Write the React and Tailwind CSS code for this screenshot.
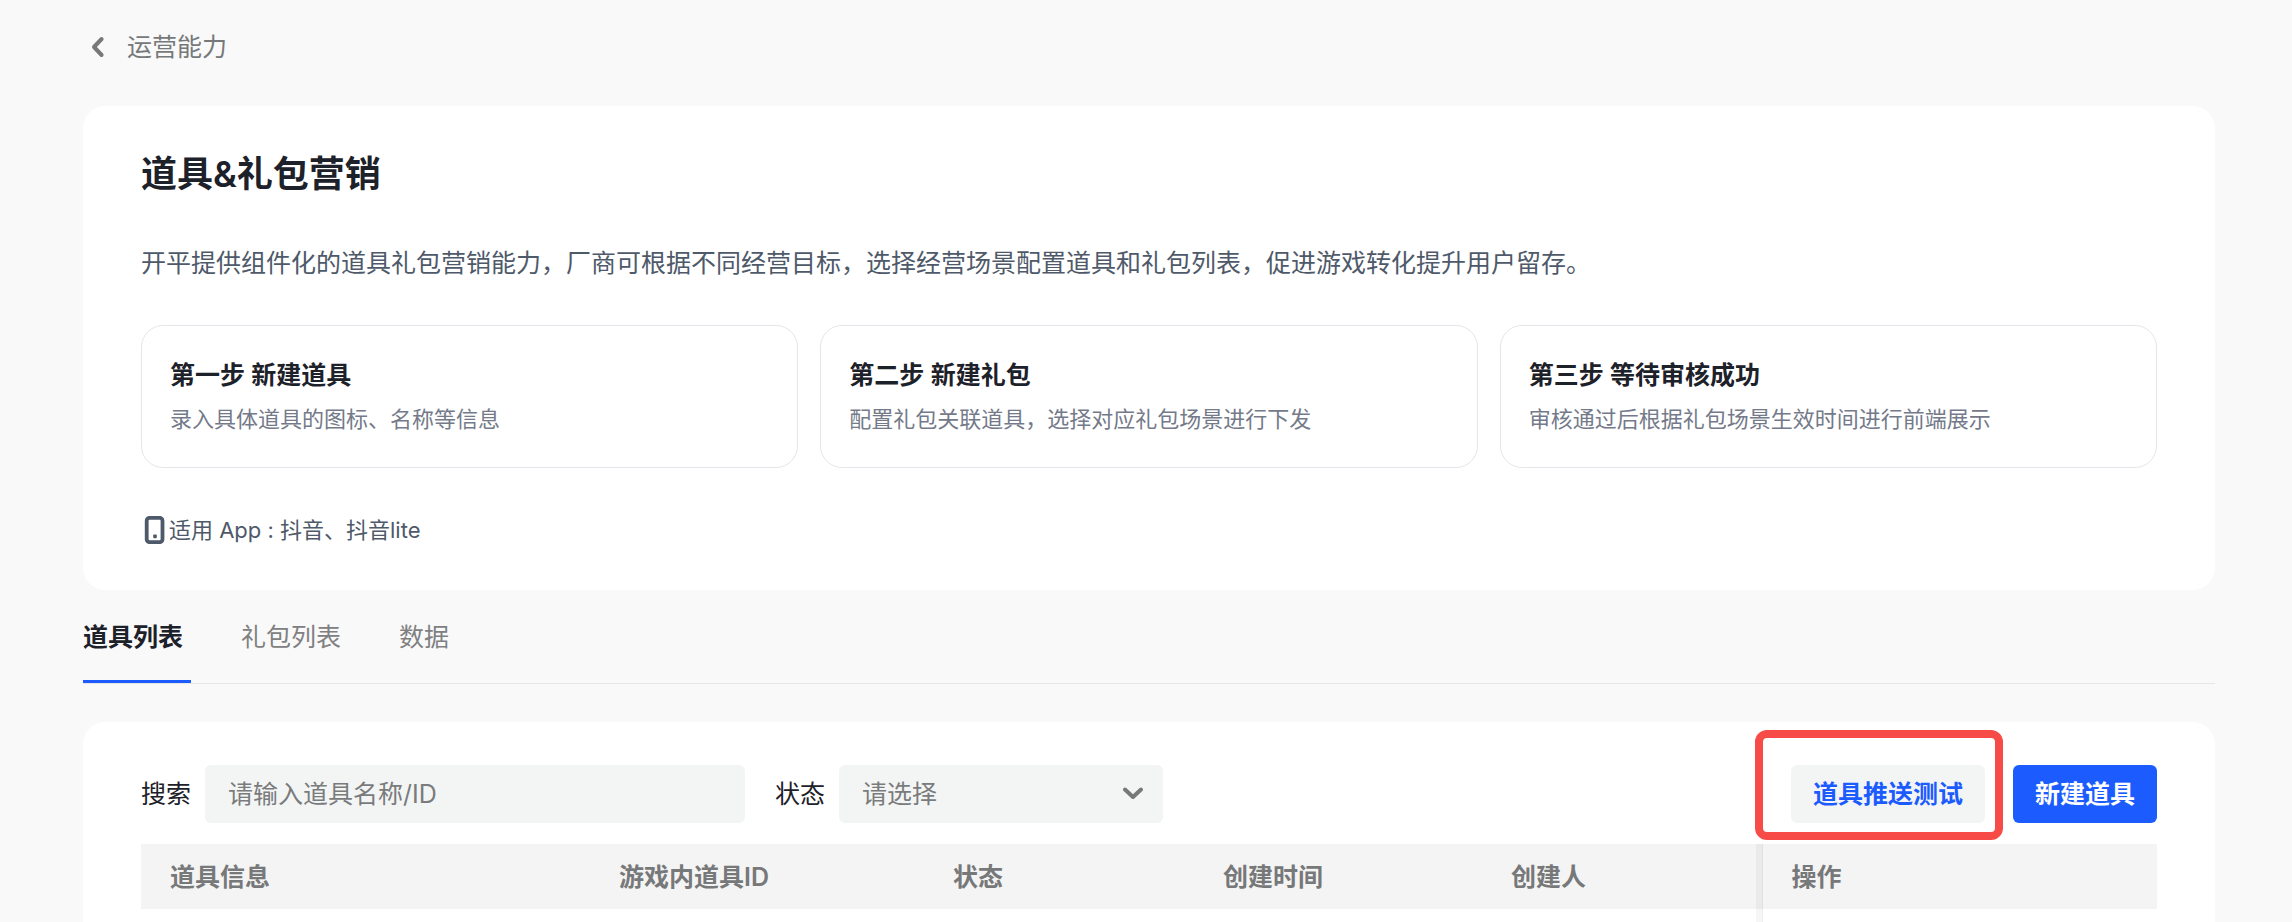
import React from "react";

const steps = [
  { title: "第一步 新建道具", text: "录入具体道具的图标、名称等信息" },
  { title: "第二步 新建礼包", text: "配置礼包关联道具，选择对应礼包场景进行下发" },
  { title: "第三步 等待审核成功", text: "审核通过后根据礼包场景生效时间进行前端展示" },
];

function PhoneIcon() {
  return (
    <svg className="h-7 w-7 shrink-0" viewBox="0 0 28 28" fill="none" aria-hidden="true">
      <rect x="5.7" y="1.8" width="15.8" height="24.4" rx="3" stroke="#4e5969" strokeWidth="3.8" />
      <rect x="12.2" y="18.6" width="3.6" height="3.6" rx="1" fill="#4e5969" />
    </svg>
  );
}

function Header() {
  return (
    <header className="flex items-center pl-2 pt-[27px] leading-10">
      <a href="#back" className="flex items-center gap-[22px] text-[#777879]">
        <svg className="h-[22px] w-[14px]" viewBox="0 0 14 22" fill="none" aria-hidden="true">
          <path d="M10.6 3 L3 11 L10.6 19" stroke="#777879" strokeWidth="4" strokeLinecap="round" strokeLinejoin="round" />
        </svg>
        <span>运营能力</span>
      </a>
    </header>
  );
}

function Intro() {
  return (
    <section className="mt-[39px] rounded-[22px] bg-white px-[58px] pb-10 pt-[42px]">
      <h1 className="text-4xl font-semibold leading-[52px]">道具&amp;礼包营销</h1>
      <p className="mt-[43px] leading-10 text-[#4e5969]">
        开平提供组件化的道具礼包营销能力，厂商可根据不同经营目标，选择经营场景配置道具和礼包列表，促进游戏转化提升用户留存。
      </p>
      <div className="mt-[42px] grid grid-cols-3 gap-[22px]">
        {steps.map((s) => (
          <div key={s.title} className="rounded-[22px] border border-[#e5e6eb] px-7 pb-7 pt-[29px]">
            <h2 className="font-semibold leading-10">{s.title}</h2>
            <p className="mt-1 text-[22px] leading-10 text-[#747a89]">{s.text}</p>
          </div>
        ))}
      </div>
      <div className="mt-[42px] flex items-center text-[22px] leading-10 text-[#4e5969]">
        <PhoneIcon />
        <span>适用 App : 抖音、抖音lite</span>
      </div>
    </section>
  );
}

function Tabs() {
  return (
    <nav className="flex gap-[50px] border-b border-[#e5e6e8]">
      <button type="button" className="w-[108px] border-b-[3px] border-[#1c5cff] pb-[23px] pt-[27px] text-left font-semibold leading-10">
        道具列表
      </button>
      <button type="button" className="border-b-[3px] border-transparent pb-[23px] pt-[27px] pr-2 leading-10 text-[#7f8081]">礼包列表</button>
      <button type="button" className="border-b-[3px] border-transparent pb-[23px] pt-[27px] leading-10 text-[#7f8081]">数据</button>
    </nav>
  );
}

function Filters() {
  return (
    <div className="flex items-center">
      <label htmlFor="keyword">搜索</label>
      <input
        id="keyword"
        type="text"
        placeholder="请输入道具名称/ID"
        className="ml-[14px] h-[58px] w-[540px] rounded-md bg-[#f3f5f5] px-[23px] placeholder:text-[#7a7b7c]"
      />
      <label htmlFor="status" className="ml-[30px]">状态</label>
      <div className="relative ml-[14px]">
        <select id="status" className="h-[58px] w-[324px] appearance-none rounded-md bg-[#f3f5f5] px-[23px] text-[#7a7b7c]">
          <option>请选择</option>
        </select>
        <svg className="pointer-events-none absolute right-5 top-[21px] h-4 w-5" viewBox="0 0 20 16" fill="none" aria-hidden="true">
          <path d="M2 3.5 L10 11 L18 3.5" stroke="#777879" strokeWidth="4" strokeLinecap="round" strokeLinejoin="round" />
        </svg>
      </div>
      <div className="relative ml-auto">
        <button type="button" className="h-[58px] rounded-md bg-[#f3f5f5] px-[22px] font-semibold text-[#1c5cff]">道具推送测试</button>
        <div className="pointer-events-none absolute -bottom-[17px] -left-9 -right-[18px] -top-[35px] rounded-xl border-8 border-[#f64b47]" />
      </div>
      <button type="button" className="ml-7 h-[58px] rounded-md bg-[#1c5cff] px-[22px] font-semibold text-white">新建道具</button>
    </div>
  );
}

function ItemTable() {
  return (
    <table className="mt-[21px] w-full table-fixed border-collapse text-left text-[#777879]">
      <colgroup>
        <col className="w-[449px]" />
        <col className="w-[334px]" />
        <col className="w-[270px]" />
        <col className="w-[288px]" />
        <col className="w-[274px]" />
        <col className="w-[6px]" />
        <col />
      </colgroup>
      <thead>
        <tr className="h-[65px] bg-[#f4f4f4]">
          <th className="pl-[29px] font-semibold">道具信息</th>
          <th className="pl-[29px] font-semibold">游戏内道具ID</th>
          <th className="pl-[29px] font-semibold">状态</th>
          <th className="pl-[29px] font-semibold">创建时间</th>
          <th className="pl-[29px] font-semibold">创建人</th>
          <td className="border-r border-[#e0e0e0] bg-[#eaeaea]" />
          <th className="pl-[29px] font-semibold">操作</th>
        </tr>
      </thead>
      <tbody>
        <tr className="h-[13px]">
          <td colSpan={5} />
          <td className="border-r border-[#ededed] bg-[#f6f6f6]" />
          <td />
        </tr>
      </tbody>
    </table>
  );
}

export default function App() {
  return (
    <main className="min-h-screen bg-[#f9f9f9] pl-[83px] pr-[77px] font-['Inter','Noto_Sans_CJK_SC',sans-serif] text-[25px] leading-10 text-[#1d2129]">
      <Header />
      <Intro />
      <Tabs />
      <section className="mt-[38px] rounded-t-[22px] bg-white px-[58px] pt-[43px]">
        <Filters />
        <ItemTable />
      </section>
    </main>
  );
}
